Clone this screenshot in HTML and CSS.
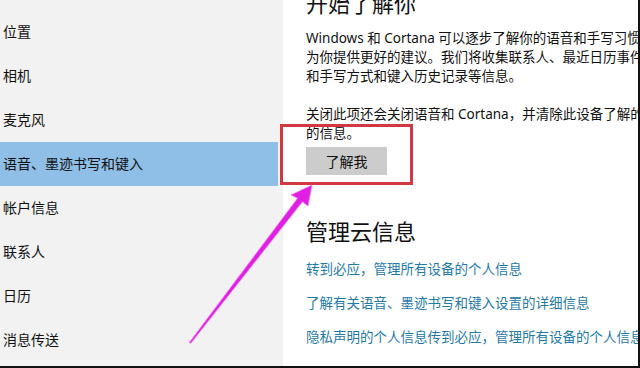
FILE: index.html
```html
<!DOCTYPE html>
<html lang="zh-CN">
<head>
    <meta charset="UTF-8">
    <meta name="viewport" content="width=device-width, initial-scale=1.0">
    <title>隐私 - 语音、墨迹书写和键入</title>
    <link rel="stylesheet" href="styles.css">
</head>
<body>
    <div class="window">
        <div class="sidebar">
            <div class="nav-item">位置</div>
            <div class="nav-item">相机</div>
            <div class="nav-item">麦克风</div>
            <div class="nav-item active">语音、墨迹书写和键入</div>
            <div class="nav-item">帐户信息</div>
            <div class="nav-item">联系人</div>
            <div class="nav-item">日历</div>
            <div class="nav-item">消息传送</div>
        </div>
        <div class="content">
            <h1 class="title">开始了解你</h1>
            <p class="text intro">Windows 和 Cortana 可以逐步了解你的语音和手写习惯，以便<br>为你提供更好的建议。我们将收集联系人、最近日历事件、语音<br>和手写方式和键入历史记录等信息。</p>
            <p class="text note">关闭此项还会关闭语音和 Cortana，并清除此设备了解的有关你<br>的信息。</p>
            <button class="btn">了解我</button>
            <h2 class="title cloud">管理云信息</h2>
            <a class="link first" href="#">转到必应，管理所有设备的个人信息</a>
            <a class="link" href="#">了解有关语音、墨迹书写和键入设置的详细信息</a>
            <a class="link" href="#">隐私声明的个人信息传到必应，管理所有设备的个人信息</a>
        </div>
        <div class="highlight"></div>
        <svg class="arrow" width="640" height="368" viewBox="0 0 640 368">
            <polygon points="312,185 291,195 297.6,198.2 189,343 191,343 302.4,201.8 308,206" fill="#e11fe3" stroke="#f07af0" stroke-width="0.8" stroke-linejoin="round"/>
        </svg>
    </div>
</body>
</html>
```

FILE: styles.css
```css
* { margin: 0; padding: 0; box-sizing: border-box; }
body { font-family: 'Noto Sans', 'Noto Sans CJK SC', sans-serif; background: #fff; color: #000; }
.window { position: relative; width: 640px; height: 368px; display: flex; overflow: hidden; border-right: 2px solid #111; border-bottom: 2px solid #111; }
.sidebar { width: 283px; flex-shrink: 0; background: #f2f2f2; padding-top: 10px; }
.nav-item { height: 44px; line-height: 44px; padding-left: 3px; font-size: 14px; color: #111; margin-right: 5px; }
.nav-item.active { background: #8fbfe7; }
.content { flex: 1; padding-left: 23px; white-space: nowrap; overflow: hidden; }
.title { font-size: 22px; font-weight: normal; line-height: 28px; margin-top: -11px; color: #111; }
.text { font-size: 13.5px; line-height: 19px; color: #111; }
.intro { margin-top: 12px; }
.note { margin-top: 19px; }
.btn { display: block; margin-top: 4px; width: 81px; height: 28px; border: none; background: #cccccc; font-family: inherit; font-size: 14px; color: #111; }
.cloud { margin-top: 41px; line-height: 30px; }
.link { display: block; font-size: 13.5px; line-height: 20px; color: #1f7aa8; text-decoration: none; margin-top: 14px; }
.link.first { margin-top: 13px; }
.highlight { position: absolute; left: 280px; top: 124px; width: 133px; height: 61px; border: 3px solid #d0393f; }
.arrow { position: absolute; left: 0; top: 0; }
```
